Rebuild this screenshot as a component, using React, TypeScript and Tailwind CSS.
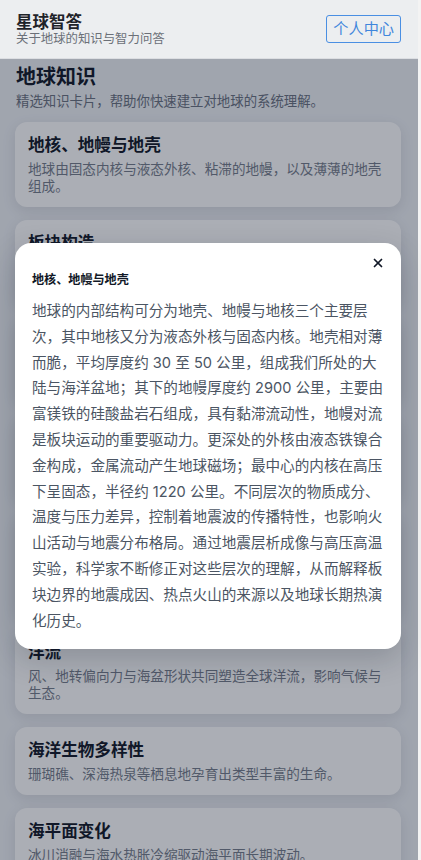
import { X } from "lucide-react";

type Card = { title: string; desc: string };

const cards: Card[] = [
  { title: "地核、地幔与地壳", desc: "地球由固态内核与液态外核、粘滞的地幔，以及薄薄的地壳组成。" },
  { title: "板块构造", desc: "岩石圈被分割成十余个大小不一的板块，在地幔对流的推动下缓慢移动。" },
  { title: "火山与地震", desc: "板块边界处能量不断积聚与释放，形成环太平洋火山地震带等活跃区域。" },
  { title: "大气层结构", desc: "对流层、平流层、中间层与热层依次分布，共同保护并调节地表环境。" },
  {
    title: "水循环",
    desc: "蒸发、凝结、降水与径流构成连续的水循环过程，它在海洋、大气与陆地之间输送水分和热量，深刻塑造着各地的天气与地貌特征。",
  },
  { title: "洋流", desc: "风、地转偏向力与海盆形状共同塑造全球洋流，影响气候与生态。" },
  { title: "海洋生物多样性", desc: "珊瑚礁、深海热泉等栖息地孕育出类型丰富的生命。" },
  { title: "海平面变化", desc: "冰川消融与海水热胀冷缩驱动海平面长期波动。" },
  { title: "极地冰盖", desc: "南极与格陵兰冰盖储存了地球上大部分淡水资源。" },
];

const detail =
  "地球的内部结构可分为地壳、地幔与地核三个主要层次，其中地核又分为液态外核与固态内核。地壳相对薄而脆，平均厚度约 30 至 50 公里，组成我们所处的大陆与海洋盆地；其下的地幔厚度约 2900 公里，主要由富镁铁的硅酸盐岩石组成，具有黏滞流动性，地幔对流是板块运动的重要驱动力。更深处的外核由液态铁镍合金构成，金属流动产生地球磁场；最中心的内核在高压下呈固态，半径约 1220 公里。不同层次的物质成分、温度与压力差异，控制着地震波的传播特性，也影响火山活动与地震分布格局。通过地震层析成像与高压高温实验，科学家不断修正对这些层次的理解，从而解释板块边界的地震成因、热点火山的来源以及地球长期热演化历史。";

export default function App() {
  return (
    <div className="h-[860px] w-full overflow-hidden flex bg-[#eef1f5] font-['Inter','Noto_Sans_CJK_SC',sans-serif]">
      <div className="relative flex-1 min-w-0">

        {/* Header */}
        <header className="relative z-20 h-[59px] flex justify-between pl-4 pr-[17px] bg-[#eceef0] border-b border-[#dcdee2]">
          <div className="pt-[12px]">
            <h1 className="text-[16.5px] leading-[20px] font-bold text-[#1f2329]">星球智答</h1>
            <p className="text-[12.4px] leading-[12px] text-[#6b7078] mt-[1px]">关于地球的知识与智力问答</p>
          </div>
          <button className="mt-[15px] h-[28px] px-[6px] border-[1.5px] border-[#4a8fe3] rounded-[3px] text-[15.2px] leading-none text-[#3f86dc]">
            个人中心
          </button>
        </header>

        {/* Content */}
        <main className="pl-[15px] pr-[17px] pt-[5px]">
          <h2 className="pl-px text-[20px] leading-[26px] font-bold text-[#111827]">地球知识</h2>
          <p className="pl-px mt-px text-[13.4px] leading-[20px] text-[#6b7280]">
            精选知识卡片，帮助你快速建立对地球的系统理解。
          </p>

          <div className="mt-[11px] flex flex-col gap-[13px]">
            {cards.map((c) => (
              <div
                key={c.title}
                className="bg-white rounded-xl px-[13px] py-3 shadow-[0_4px_14px_rgba(15,23,42,0.10)]"
              >
                <h3 className="text-[16.6px] leading-[22px] font-bold text-[#111827]">{c.title}</h3>
                <p className="mt-[5px] text-[13.6px] leading-[17px] text-[#767d8b]">{c.desc}</p>
              </div>
            ))}
          </div>
        </main>

        {/* Overlay + modal */}
        <div className="absolute inset-x-0 top-[59px] bottom-0 z-10 bg-[#0f172a]/35 pl-[15px] pr-[17px] pt-[184px]">
          <div className="bg-white rounded-2xl pl-[17px] pr-[17px] pb-[15px] shadow-[0_10px_30px_rgba(15,23,42,0.2)]">
            <div className="flex justify-end pt-[13px] -mr-[1px]">
              <button className="w-[14px] h-[14px] flex items-center justify-center text-[#111827]">
                <X size={14} strokeWidth={3} />
              </button>
            </div>
            <h4 className="mt-px text-[12.1px] leading-[18px] font-bold text-[#111827]">地核、地幔与地壳</h4>
            <p className="mt-[10px] text-[14.6px] leading-[25.8px] text-[#4b5563]">{detail}</p>
          </div>
        </div>
      </div>

      {/* scrollbar strip */}
      <div className="w-[3px] bg-[#f3f3f3]" />
    </div>
  );
}
